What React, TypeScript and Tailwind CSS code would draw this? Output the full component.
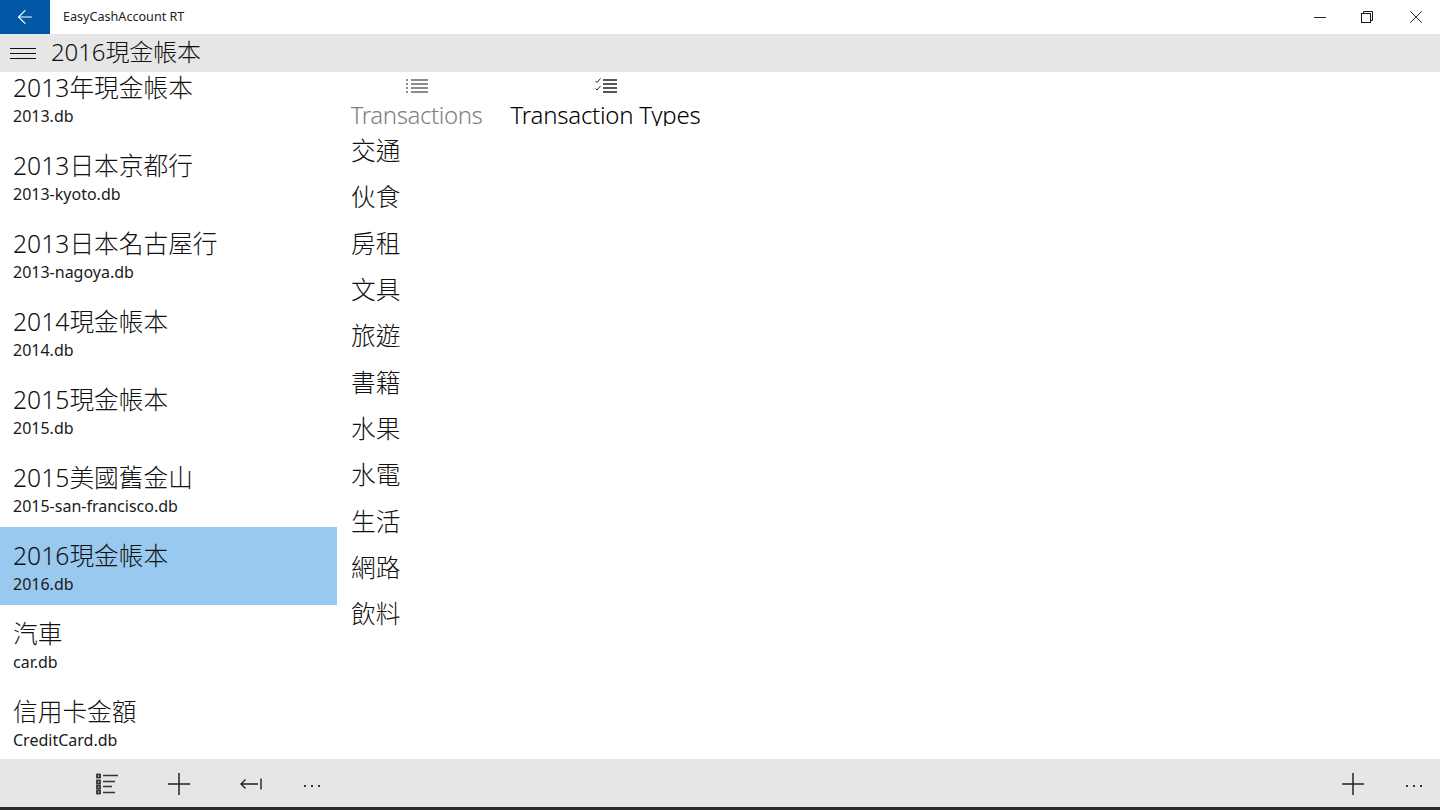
import React from 'react';
import { ArrowLeft, X } from 'lucide-react';

const FONT = '[font-family:"Noto_Sans","Noto_Sans_CJK_TC",sans-serif]';

const books = [
  { name: '2013年現金帳本', file: '2013.db' },
  { name: '2013日本京都行', file: '2013-kyoto.db' },
  { name: '2013日本名古屋行', file: '2013-nagoya.db' },
  { name: '2014現金帳本', file: '2014.db' },
  { name: '2015現金帳本', file: '2015.db' },
  { name: '2015美國舊金山', file: '2015-san-francisco.db' },
  { name: '2016現金帳本', file: '2016.db', selected: true },
  { name: '汽車', file: 'car.db' },
  { name: '信用卡金額', file: 'CreditCard.db' },
];

const types = ['交通', '伙食', '房租', '文具', '旅遊', '書籍', '水果', '水電', '生活', '網路', '飲料'];

const RestoreIcon = () => (
  <svg width="12" height="12" viewBox="0 0 12 12" fill="none" stroke="#1a1a1a" strokeWidth="1">
    <rect x="0.5" y="2.5" width="9" height="9" />
    <path d="M2.5 2.5V0.5H11.5V9.5H9.5" />
  </svg>
);

const HamburgerIcon = () => (
  <svg width="26" height="12" viewBox="0 0 26 12" stroke="#111" strokeWidth="1" fill="none">
    <path d="M0 1.5h26M0 6.5h26M0 11.5h26" />
  </svg>
);

const ListIcon = () => (
  <svg width="22" height="16" viewBox="0 0 22 16" stroke="#666" strokeWidth="1.6" fill="none">
    <path d="M0 2h2M0 6h2M0 10h2M0 14h2" />
    <path d="M5 2h17M5 6h17M5 10h17M5 14h17" />
  </svg>
);

const CheckListIcon = () => (
  <svg width="22" height="16" viewBox="0 0 22 16" stroke="#222" fill="none">
    <path d="M0.5 3l1.5 1.5L5.5 0.5M0.5 10.5l1.5 1.5L5.5 8" strokeWidth="1" />
    <path d="M8 2h14M8 6h14M8 10h14M8 14h14" strokeWidth="1.6" />
  </svg>
);

const DetailsIcon = () => (
  <svg width="22" height="22" viewBox="0 0 22 22" fill="none" stroke="#333">
    <rect x="1" y="1.5" width="3" height="3" strokeWidth="1.8" />
    <rect x="1" y="7.5" width="3" height="3" strokeWidth="1.8" />
    <rect x="1" y="12.5" width="3" height="3" strokeWidth="1.8" />
    <rect x="1" y="17.5" width="3" height="3" strokeWidth="1.8" />
    <path d="M7 2.5h15M7 8.5h12M7 13.5h9M7 19.5h12" strokeWidth="1.5" />
  </svg>
);

const PlusIcon = () => (
  <svg width="22" height="22" viewBox="0 0 22 22" fill="none" stroke="#222" strokeWidth="1.5">
    <path d="M0 11h22M11 0v22" />
  </svg>
);

const BackBarIcon = () => (
  <svg width="22" height="12" viewBox="0 0 22 12" fill="none" stroke="#222" strokeWidth="1.4">
    <path d="M1 6h17M5.5 1.5L1 6l4.5 4.5M21 0.5v11" />
  </svg>
);

const Dots = () => (
  <span className="flex gap-[5px] mt-[3px]">
    <span className="w-[2px] h-[2px] bg-[#333]" />
    <span className="w-[2px] h-[2px] bg-[#333]" />
    <span className="w-[2px] h-[2px] bg-[#333]" />
  </span>
);

export default function App() {
  return (
    <div className={`${FONT} w-[1440px] h-[810px] flex flex-col overflow-hidden bg-white text-[#1a1a1a]`}>
      {/* title bar */}
      <div className="h-[34px] shrink-0 flex items-center">
        <div className="w-[50px] h-full bg-[#0358a6] flex items-center justify-center">
          <ArrowLeft size={22} color="#fff" strokeWidth={1.2} />
        </div>
        <span className="ml-[13px] text-[12.6px] text-[#222]">EasyCashAccount RT</span>
        <div className="ml-auto flex items-center h-full">
          <div className="w-[48px] flex justify-center"><span className="w-[12px] h-px bg-[#222]" /></div>
          <div className="w-[48px] flex justify-center pr-[2px]"><RestoreIcon /></div>
          <div className="w-[48px] flex justify-center"><X size={22} strokeWidth={1} /></div>
        </div>
      </div>

      {/* header */}
      <div className="h-[38px] shrink-0 bg-[#e6e6e6] flex items-center">
        <div className="w-[51px] pl-[10px]"><HamburgerIcon /></div>
        <span className="text-[24px] leading-[36px] pb-[2px] font-light tracking-[-0.1px] text-[#111]">2016現金帳本</span>
      </div>

      <div className="flex-1 min-h-0 flex">
        {/* book list */}
        <div className="w-[337px] shrink-0 overflow-hidden">
          <div className="-mt-[13px]">
            {books.map(b => (
              <div key={b.file} className={`h-[78px] pl-[13px] pt-[11px] ${b.selected ? 'bg-[#99c9ef]' : ''}`}>
                <div className="text-[24.7px] leading-[35px] font-light text-[#111] whitespace-nowrap">{b.name}</div>
                <div className="text-[16px] leading-[22px] whitespace-nowrap">{b.file}</div>
              </div>
            ))}
          </div>
        </div>

        {/* tabs */}
        <div className="flex-1 pl-[14px]">
          <div className="flex h-[54px] overflow-hidden">
            <div className="w-[131px] flex flex-col items-center">
              <div className="h-[28px] shrink-0 flex items-center"><ListIcon /></div>
              <span className="shrink-0 text-[24px] leading-[30px] tracking-[-0.4px] font-light text-[#808080] whitespace-nowrap">Transactions</span>
            </div>
            <div className="w-[191px] ml-[28px] flex flex-col items-center">
              <div className="h-[28px] shrink-0 flex items-center"><CheckListIcon /></div>
              <span className="shrink-0 text-[24px] leading-[30px] tracking-[-0.25px] font-light text-black whitespace-nowrap">Transaction Types</span>
            </div>
          </div>
          <div className="flex flex-col pt-[2px]">
            {types.map(t => (
              <div key={t} className="h-[46.35px] text-[24.7px] leading-[46px] font-light text-[#111]">{t}</div>
            ))}
          </div>
        </div>
      </div>

      {/* bottom app bar */}
      <div className="h-[51px] shrink-0 bg-[#e6e6e6] border-b-[3px] border-[#2b2b2b] flex items-center pt-[2px]">
        <div className="ml-[96px] w-[22px] flex justify-center"><DetailsIcon /></div>
        <div className="ml-[50px] w-[22px] flex justify-center"><PlusIcon /></div>
        <div className="ml-[50px] w-[22px] flex justify-center"><BackBarIcon /></div>
        <div className="ml-[42px]"><Dots /></div>
        <div className="ml-auto w-[22px] flex justify-center"><PlusIcon /></div>
        <div className="ml-[42px] mr-[18px]"><Dots /></div>
      </div>
    </div>
  );
}
